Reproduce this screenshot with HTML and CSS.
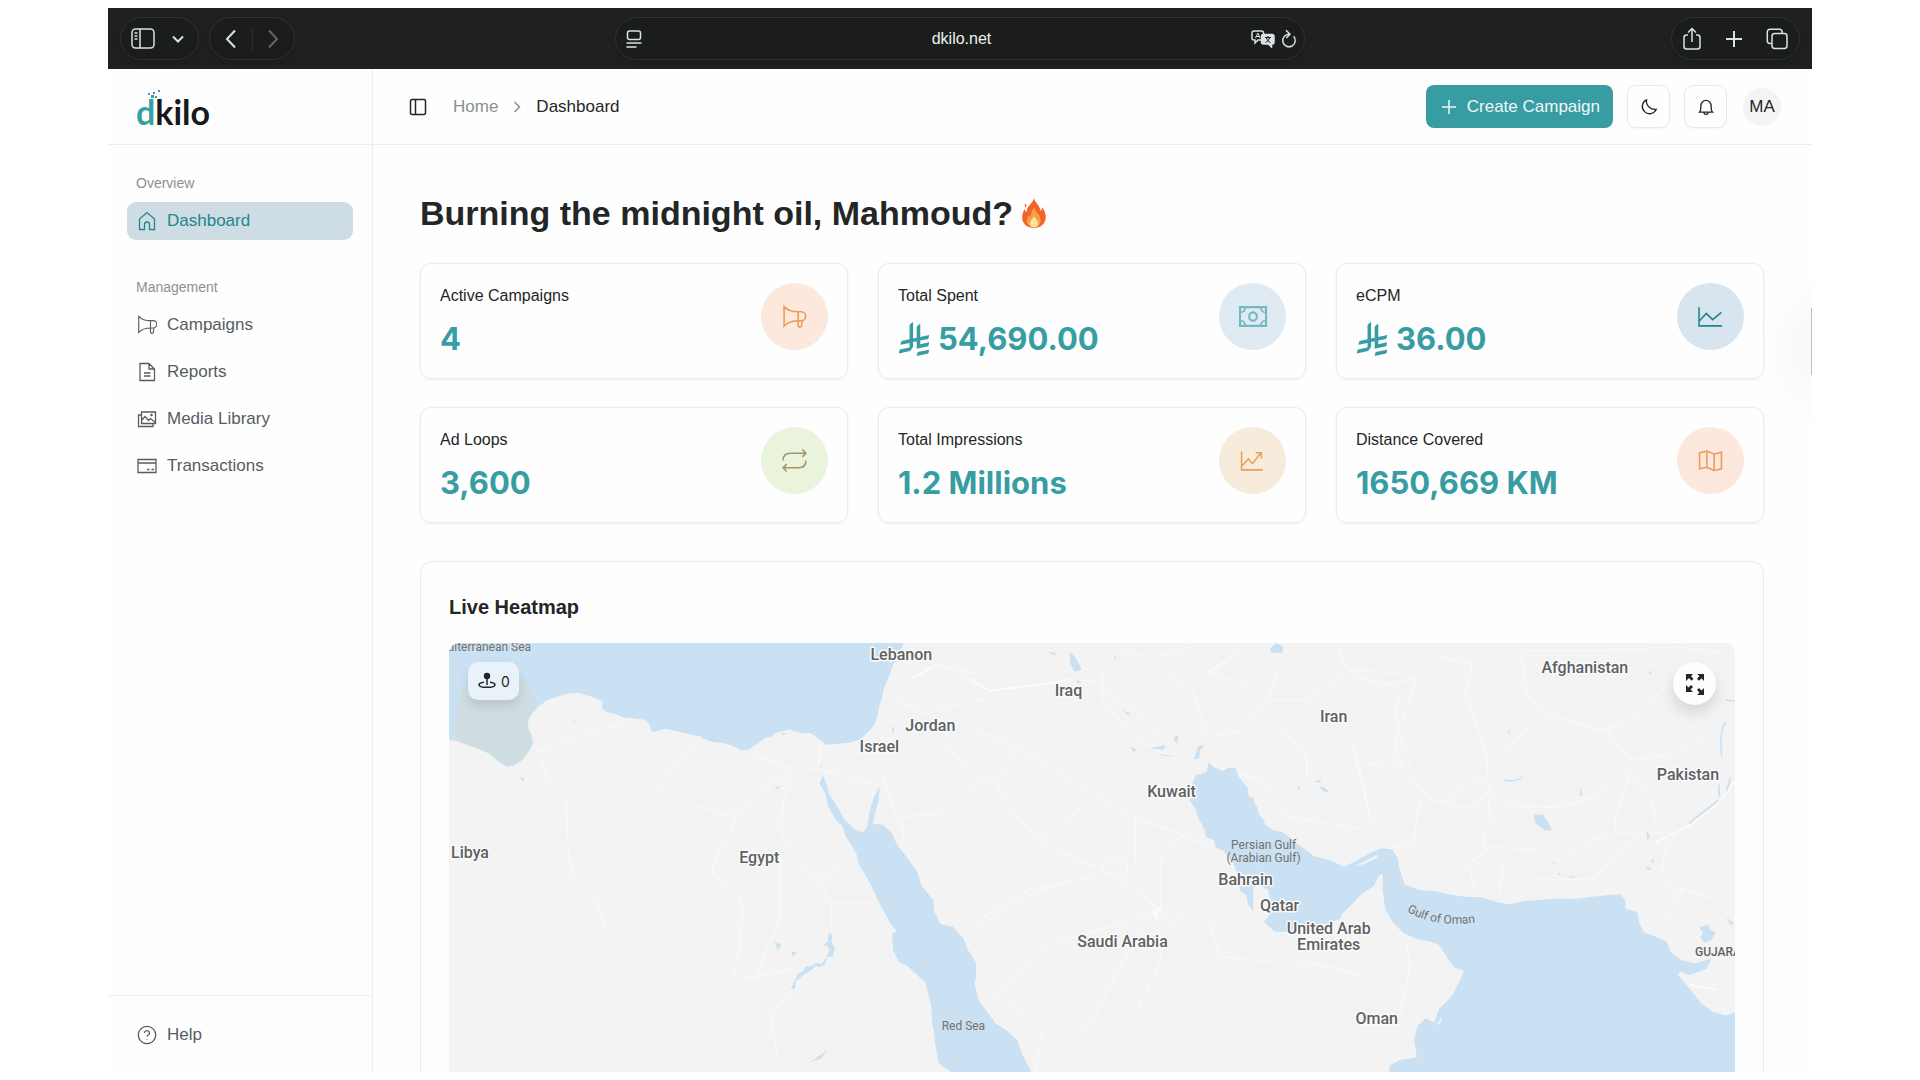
FILE: index.html
```html
<!DOCTYPE html>
<html lang="en">
<head>
<meta charset="utf-8">
<meta name="viewport" content="width=device-width, initial-scale=1">
<title>dkilo – Dashboard</title>
<link rel="stylesheet" href="styles.css">
</head>
<body>
<svg class="defs" aria-hidden="true">
  <symbol id="riyal" viewBox="0 0 1124 1257"><path fill="currentColor" d="M699.62,1113.02h0c-20.06,44.48-33.32,92.75-38.4,143.37l424.51-90.24c20.06-44.47,33.31-92.75,38.4-143.37l-424.51,90.24Z"/><path fill="currentColor" d="M1085.73,895.8c20.06-44.47,33.32-92.75,38.4-143.37l-330.68,70.33v-135.2l292.27-62.11c20.06-44.47,33.32-92.75,38.4-143.37l-330.68,70.27V66.13c-50.67,28.45-95.67,66.32-132.25,110.99v403.35l-132.25,28.11V0c-50.67,28.44-95.67,66.32-132.25,110.99v525.69l-295.91,62.88c-20.06,44.47-33.33,92.75-38.42,143.37l334.33-71.05v170.26l-358.3,76.14c-20.06,44.47-33.32,92.75-38.4,143.37l375.04-79.7c30.53-6.35,56.77-24.4,73.83-49.24l68.78-101.97v-.02c7.14-10.55,11.3-23.27,11.3-36.97v-149.98l132.25-28.11v270.4l424.53-90.28Z"/></symbol>
  <symbol id="horn" viewBox="0 0 24 24"><path d="M2 2.500v18.600C5.500 17.400 10 16 15.500 16V7.500C10 7.500 5.500 6.200 2 2.500ZM15.500 7.500h3a4.250 4.250 0 0 1 0 8.500h-3M15.500 16v5l1.200 1.200 1.800-.5 1-5.500"/></symbol>
</svg>
<div class="window">
  <header class="browser">
    <div class="left">
      <div class="pill pill-side">
        <button class="tool" aria-label="Show sidebar"><svg width="24" height="24" viewBox="0 0 24 24"><rect x="1" y="2" width="22" height="19" rx="3.500"/><path d="M9 2v19M3.500 6h3M3.500 9h3M3.500 12h3"/></svg></button>
        <button class="tool" aria-label="Tab groups"><svg width="12" height="12" viewBox="0 0 12 12"><path stroke-width="2" d="M1 3.500l5 5 5-5"/></svg></button>
      </div>
      <div class="pill pill-nav">
        <button class="tool" aria-label="Back"><svg width="12" height="20" viewBox="0 0 12 20"><path stroke-width="2" d="M10 1.500L2 10l8 8.500"/></svg></button>
        <span class="split"></span>
        <button class="tool dim" aria-label="Forward"><svg width="12" height="20" viewBox="0 0 12 20"><path stroke-width="2" d="M2 1.500L10 10l-8 8.500"/></svg></button>
      </div>
    </div>
    <div class="pill pill-url">
      <svg width="16" height="18" viewBox="0 0 16 18"><rect x="1.500" y="1" width="13" height="8.500" rx="2"/><path d="M.5 13h15M.5 17h10"/></svg>
      <input class="url" type="text" value="dkilo.net" aria-label="Address">
      <span class="url-tools">
        <svg width="24" height="18" viewBox="0 0 24 18"><path d="M3 1h7.500a2 2 0 0 1 2 2v7H7l-3 3v-3H3a2 2 0 0 1-2-2V3a2 2 0 0 1 2-2Z"/><path d="M4.500 8l2.300-5 2.300 5M5.300 6.500h3" stroke-width="1"/><path class="solid" d="M12.500 4.500H21a2 2 0 0 1 2 2V12a2 2 0 0 1-2 2h-.5v3L17.500 14h-5a2 2 0 0 1-2-2V6.500a2 2 0 0 1 2-2Z"/><path class="ink" d="M14 7.500h6M17 6v1.500M14.500 12.500c2.500-1 3.500-3 4-5M15.500 8c.5 2 2 3.800 4 4.500"/></svg>
        <svg width="16" height="20" viewBox="0 0 16 20"><path d="M12.600 7.200a6.300 6.300 0 1 1-4.600-2M5 1.200L9 5.200 5.200 9"/></svg>
      </span>
    </div>
    <div class="pill pill-actions">
      <button class="tool" aria-label="Share"><svg width="20" height="24" viewBox="0 0 20 24"><path d="M6 8H4.500A2.500 2.500 0 0 0 2 10.500v9A2.500 2.500 0 0 0 4.500 22h11a2.500 2.500 0 0 0 2.500-2.500v-9A2.500 2.500 0 0 0 15.500 8H14M10 15V1.500M6 5.500l4-4 4 4"/></svg></button>
      <button class="tool" aria-label="New tab"><svg width="18" height="18" viewBox="0 0 18 18"><path stroke-width="2" d="M9 1v16M1 9h16"/></svg></button>
      <button class="tool" aria-label="Show all tabs"><svg width="22" height="22" viewBox="0 0 22 22"><path d="M6 15.500H4A2.700 2.700 0 0 1 1.300 13V4A2.700 2.700 0 0 1 4 1.300h9.500A2.700 2.700 0 0 1 16.200 4v1.500"/><rect x="6" y="5.500" width="15" height="15" rx="2.700"/></svg></button>
    </div>
  </header>

  <div class="app">
    <aside class="sidebar">
      <a class="brand" href="#" aria-label="dkilo home">
        <svg width="90" height="42" viewBox="0 0 90 42"><text class="logo" x="0" y="38"><tspan class="logo-d">d</tspan>kilo</text><g fill="#389fa6"><rect x="12" y="6" width="2" height="2"/><rect x="15" y="8" width="3" height="3"/><rect x="17" y="5" width="2" height="2"/><rect x="22" y="3" width="2" height="2"/><rect x="19" y="9" width="2" height="2"/></g></svg>
      </a>
      <nav class="nav">
        <h2 class="group">Overview</h2>
        <a class="item active" href="#"><svg viewBox="0 0 20 20"><path d="M2.500 18.500V8L10 1.500 17.500 8v10.500h-5V13.500a2.500 2.500 0 0 0-5 0v5Z"/></svg>Dashboard</a>
        <h2 class="group next">Management</h2>
        <a class="item" href="#"><svg viewBox="0 1 23 23"><use href="#horn" width="24" height="24"/></svg>Campaigns</a>
        <a class="item" href="#"><svg viewBox="0 0 20 20"><path d="M3 1.500h9l5.500 5.500v11.500H3ZM12 1.500v5.500h5.500M7 11h6.500M7 14h6.500"/></svg>Reports</a>
        <a class="item" href="#"><svg viewBox="0 0 20 20"><path d="M4.500 3h14v11.500h-14ZM4.500 6H1.500v11.500H16v-3M4.500 11.500l3.500-4 3.500 4 2-2 5 4"/><circle cx="14.500" cy="6" r=".6"/></svg>Media Library</a>
        <a class="item" href="#"><svg viewBox="0 0 20 20"><path d="M1 3.500h18v13H1ZM1 7h18M10 13.500h2.500M14.500 13.500H17"/></svg>Transactions</a>
      </nav>
      <div class="foot">
        <a class="item" href="#"><svg viewBox="0 0 20 20"><circle cx="10" cy="10" r="8.700"/><path d="M7.500 8a2.500 2.300 0 1 1 3.800 2c-.9.500-1.300.9-1.300 1.700M10 14.200v.6"/></svg>Help</a>
      </div>
    </aside>

    <div class="content">
      <header class="topbar">
        <button class="plain" aria-label="Toggle sidebar"><svg width="18" height="18" viewBox="0 0 18 18"><rect x="1.500" y="1.500" width="15" height="15" rx="1.500"/><path d="M6.500 1.500v15"/></svg></button>
        <nav class="crumbs" aria-label="Breadcrumb">
          <a href="#">Home</a>
          <svg width="8" height="12" viewBox="0 0 8 12"><path d="M1.500 1l5 5-5 5"/></svg>
          <span>Dashboard</span>
        </nav>
        <div class="actions">
          <button class="create"><svg width="16" height="16" viewBox="0 0 16 16"><path d="M8 1v14M1 8h14"/></svg>Create Campaign</button>
          <button class="square" aria-label="Dark mode"><svg width="18" height="18" viewBox="0 0 18 18"><path d="M6.500 1.800A8.500 8.500 0 0 0 16.300 11.300 7.300 7.300 0 1 1 6.500 1.800Z"/></svg></button>
          <button class="square" aria-label="Notifications"><svg width="18" height="18" viewBox="0 0 18 18"><path d="M2.500 14.200h13c-1.400-1.500-1.400-3-1.400-6.200a5.100 5.600 0 0 0-10.200 0c0 3.200 0 4.700-1.400 6.200ZM7 14.500c0 2.500 4 2.500 4 0"/></svg></button>
          <button class="avatar">MA</button>
        </div>
      </header>

      <main class="main">
        <h1 class="title">Burning the midnight oil, Mahmoud?
          <svg width="24" height="30" viewBox="0 0 24 30" role="img" aria-label="fire"><path fill="#f4632a" d="M12 0c0 3.500 6 7 6.500 13 1-1 1.500-2.500 1.500-4 3 4 4 7.500 3.700 11.500C23 26 18.500 30 12 30S.5 26 .2 20C0 16 1.500 13.500 2.500 11c.5 1.500 1 2.500 2 3.200C4.500 8 10.500 6 12 0ZM3.500 5.500c1.200 1.200 1 3 0 4-1-1.200-1-3 0-4Z"/><path fill="#f6a04a" d="M12.500 9c-.5 4 5 6.500 6 12 .7 5-2.500 8.500-6.500 8.500S4.500 26.500 5 22c.3-2.500 1.500-3.500 2-5 .8.800 1.200 1.500 1.500 2.500C9.500 16.500 9 12 12.500 9Z"/><path fill="#fbe3a0" d="M12 18c1 3 4 4 4 7.500 0 2.500-1.800 4-4 4s-4-1.500-4-4C8 22.500 11 21 12 18Z"/></svg>
        </h1>

        <section class="stats" aria-label="Statistics">
          <article class="card"><div><h3>Active Campaigns</h3><p class="value">4</p></div><span class="disc peach"><svg viewBox="0 0 24 24"><use href="#horn"/></svg></span></article>
          <article class="card"><div><h3>Total Spent</h3><p class="value"><svg class="riyal"><use href="#riyal"/></svg>54,690.00</p></div><span class="disc sky"><svg viewBox="0 0 24 24"><path stroke-width="2" d="M0 3h25v18H0Z"/><ellipse cx="12.500" cy="12" rx="3.700" ry="4" stroke-width="2"/><path d="M5 3c0 3-1.500 5-5 5M20 3c0 3 1.500 5 5 5M5 21c0-3-1.500-5-5-5M20 21c0-3 1.500-5 5-5"/></svg></span></article>
          <article class="card"><div><h3>eCPM</h3><p class="value"><svg class="riyal"><use href="#riyal"/></svg>36.00</p></div><span class="disc blue"><svg viewBox="0 0 24 24"><path d="M1 3v18h22M1.500 16l6.500-7 6 6 8.500-7"/></svg></span></article>
          <article class="card"><div><h3>Ad Loops</h3><p class="value">3,600</p></div><span class="disc green"><svg viewBox="0 0 24 24"><path d="M1 12C1 7 3.500 5 8 5h15M19.500 1.500L23 5l-3.500 3.500M23 12c0 5-2.500 7-7 7H1M4.500 15.500L1 19l3.500 3.500"/></svg></span></article>
          <article class="card"><div><h3>Total Impressions</h3><p class="value">1.2 Millions</p></div><span class="disc sand"><svg viewBox="0 0 24 24"><path d="M1.500 3v18H22M2 17l6-6.500 4 4.500 8-10.500M15 4.500h5.500V10"/></svg></span></article>
          <article class="card"><div><h3>Distance Covered</h3><p class="value">1650,669 KM</p></div><span class="disc peach"><svg viewBox="0 0 24 24"><path d="M1.500 4.500L8.500 3l7 3 7-2v16l-7 1.500-7-3-7 1.500ZM8.500 3v15.500M15.500 6v15.500"/></svg></span></article>
        </section>

        <section class="heat">
          <h2>Live Heatmap</h2>
          <div class="map">
            <svg class="land" viewBox="450 643 1285 429" preserveAspectRatio="xMidYMin slice" role="img" aria-label="Map of the Middle East">
              <g class="road">
                <g transform="translate(410 540) scale(.3444)">
                  <path d="M360 620C440 580 540 560 640 522M370 625C400 660 400 720 455 755C465 850 450 960 500 1015C550 1040 555 1080 570 1125M840 585C780 620 750 690 722 735C770 760 820 775 870 780C900 800 920 800 950 790C970 800 960 780 1010 730L1110 670M945 800C940 870 880 900 880 970C920 1000 970 1010 968 1080C960 1150 960 1200 940 1260C980 1275 1010 1270 1110 1245M1110 680C1080 760 1060 850 1110 900C1150 950 1160 980 1210 980L1270 935M1080 910C1070 1000 1080 1060 1070 1120C1040 1180 1020 1230 1010 1270M1190 990L1225 1055H1350M1225 1055V1140M970 612L1100 660L1190 665L1370 715M1120 1290C1080 1340 1050 1370 1050 1400L1070 1500M1190 590V660"/>
                </g>
                <g transform="translate(850 630) scale(.3571 .3333)">
                  <path class="bold" d="M170 150L250 100M340 150L395 182L560 160L620 148M1000 130L1050 95"/>
                  <path d="M250 100L340 150M620 148L700 155M705 110L710 210L790 320L920 395M1050 95L1110 50M130 210L210 250L440 190M95 440C120 560 150 560 155 640M150 560L260 550L370 440L410 460L480 340M280 110L350 130M230 320L300 380L370 440M340 300C500 340 620 470 800 560L930 615L1030 660M410 460C440 540 500 590 530 635L650 530M530 635C600 660 650 700 760 745L880 850L900 885H1160M800 560V700M390 870C480 800 560 760 700 735M700 735L720 680L780 690M350 880L500 780L620 750M930 615L870 690V840M390 870L340 910M400 1105L540 950L760 880L850 850M620 1250L680 1170L740 1050L820 880M870 900V1000L800 1150M1000 760L900 880M1010 880L1040 980L1340 1010L1430 1040M440 1100L540 1200L520 1326M780 700L770 760M700 150C760 250 850 240 870 330M870 120L960 180L1000 320M1000 130C1100 150 1130 180 1170 210H1280L1400 120L1540 130M1200 130L1170 210M1210 300L1280 380V440M1170 210L1100 300L1000 320M1410 350L1440 460L1460 580M1000 400L1150 450L1230 560L1450 600M1540 200C1500 280 1568 340 1568 410M740 40C800 90 850 90 960 50"/>
                  <path class="bold" d="M845 840L870 865M870 835L850 860M858 830V870"/>
                </g>
                <g transform="translate(1300 540) scale(.3444)">
                  <path d="M110 300C120 370 150 400 250 420L340 400L310 500C270 560 270 620 300 660C360 740 400 780 440 750C500 680 530 700 545 700M400 300L410 340L500 360L480 450C520 560 550 600 545 700C560 770 650 780 750 775C860 760 900 700 960 670C940 750 900 800 920 850C980 850 1020 850 1090 850M560 640L600 600L720 505L860 550H890L1000 500L1060 420M640 320L660 450L720 505M890 550L960 640L1080 620L1180 570M960 670L1020 760L1040 840M400 755C480 780 480 800 545 730L555 820C530 870 520 880 545 900L590 950L580 1030M545 900L490 940L510 1030M550 890L700 900M730 940L850 870L900 850M350 740L330 880L240 900M150 610L200 650L300 660M150 600L180 700L200 800M680 985H850L950 890L1000 850M1090 860C1020 950 1060 1010 1110 1020L1060 1100M1100 1010L1200 1040M310 1170L320 1240L290 1380M0 1220L180 1260M650 320H900L1100 310L1230 330"/>
                  <path class="bold" d="M1030 880L1130 830L1220 760L1263 700M1130 1290L1210 1305"/>
                </g>
              </g>
              <g class="water">
                <g transform="translate(410 540) scale(.3444)">
                  <path d="M116 298H1435L1430 315 1418 340 1405 362 1395 390 1378 430 1372 460 1365 480 1360 510 1350 535 1338 552 1310 578 1280 588 1240 592 1210 594 1190 578 1165 560 1140 562 1105 550 1080 556 1060 562 1052 572 1035 574 1010 592 985 608 965 612 940 598 915 590 880 586 850 575 848 570 820 565 780 556 745 548 705 558 697 535 685 522 655 518 625 516 600 505 575 500 560 490 562 468 530 455 495 444 460 446 430 455 400 465 375 485 352 510 345 530 348 550 357 568 360 590 350 610 330 638 305 655 285 658 262 645 235 622 200 602 160 588 116 580Z"/>
                  <path d="M1200 683L1212 710 1218 735 1240 770 1262 810 1290 838 1318 850 1330 830 1338 780 1350 745 1366 716 1362 760 1350 800 1345 825 1375 828 1395 845 1420 890 1450 930 1480 980 1485 1000 1520 1045 1522 1080 1540 1112 1568 1128V1530L1540 1518 1530 1460 1518 1400 1515 1350 1498 1285 1445 1235 1415 1210 1403 1170 1403 1140 1418 1138 1395 1110 1370 1055 1340 1000 1305 940 1298 910 1270 865 1270 840 1240 815 1215 770 1208 735 1192 708Z"/>
                  <path d="M1108 1302L1118 1280 1130 1258 1145 1250 1150 1238 1170 1236 1180 1228 1198 1230 1212 1210 1220 1190 1212 1175 1200 1178 1215 1165 1218 1140 1228 1145 1226 1165 1236 1185 1228 1210 1215 1210 1205 1235 1190 1240 1180 1236 1165 1250 1150 1258 1135 1270 1122 1280 1120 1302ZM1060 1165L1070 1172 1080 1170 1076 1182 1070 1190ZM1108 1195H1125L1115 1210ZM1165 1515L1185 1500 1215 1480 1195 1505ZM320 685L336 695 330 700ZM1403 545L1408 548 1402 568ZM1060 717L1080 715 1068 723ZM1190 650L1200 658 1195 660ZM475 522L482 528 478 531ZM1078 562L1100 560 1085 567Z"/>
                </g>
                <g transform="translate(850 630) scale(.3571 .3333)">
                  <path d="M-20 585L20 605 40 605 50 595 65 582 95 584 120 610 130 640 160 680 190 725 200 765 235 810 238 845 255 882 290 890 320 925 330 955 355 1000 355 1040 350 1060 362 1110 410 1180 440 1200 470 1230 485 1275 512 1330H290L250 1298 240 1240 235 1170 228 1120 215 1055 170 1010 140 995 122 960 122 910 135 905 105 860 80 810 50 740 25 690 20 660 -10 620Z"/>
                  <path d="M1005 397L1020 412 1045 422 1062 412 1080 413 1090 440 1115 475 1118 500 1132 505 1135 525 1142 530 1145 550 1158 568 1165 585 1190 602 1210 605 1230 620 1250 640 1280 660 1300 678 1345 690 1385 710 1430 695 1470 672 1495 657 1520 657 1500 740 1490 732 1475 740 1460 765 1435 790 1400 830 1380 850 1375 865 1340 880 1250 905 1190 905 1160 875 1175 855 1180 820 1172 780 1150 765 1130 772 1130 845 1115 820 1110 795 1092 780 1088 740 1075 700 1045 660 1025 652 1020 630 998 620 995 600 975 560 970 540 952 510 960 500 955 470 965 450 968 435 985 432 1000 425Z"/>
                  <path d="M617 65L635 85 650 120 630 125 618 100ZM1178 55L1195 40 1215 50 1212 68 1180 68ZM555 65L578 68 575 77ZM635 150L650 155 640 162ZM762 240L788 250 780 255ZM785 350L805 358 795 366ZM840 355L885 345 880 358ZM912 318L920 315 918 340 908 330ZM865 370L912 380 880 378ZM965 388L975 350 995 345 982 360 978 385ZM1300 455L1320 450 1318 458ZM1312 470L1330 472 1345 488 1328 484ZM1252 468L1262 475 1258 480ZM120 292L126 290 122 315ZM740 75L748 82 745 90Z"/>
                </g>
                <g transform="translate(1300 540) scale(.3444)">
                  <path d="M80 932L130 948 165 930 205 908 235 895 250 895 270 900 285 925 288 950 300 985 305 1000 345 1015 400 1020 430 1028 480 1035 525 1037 555 1045 575 1052 610 1057 650 1048 700 1044 750 1040 800 1042 850 1035 900 1030 930 1028 945 1045 945 1070 980 1080 985 1110 1000 1140 1030 1150 1065 1165 1075 1195 1110 1220 1150 1228 1195 1215 1180 1245 1130 1262 1105 1252 1097 1262 1130 1300 1165 1345 1200 1370 1235 1380 1267 1370V1550H258L262 1525 290 1510 340 1502 332 1450 342 1410 365 1388 390 1400 405 1360 440 1325 465 1280 476 1250 450 1242 430 1215 405 1175 380 1165 340 1158 300 1140 270 1110 248 1070 240 1010 242 965 232 970 215 1005 160 1040Z"/>
                  <path d="M680 797L705 797 722 820 732 843 710 842 682 820ZM592 695L622 697 640 690 650 682 645 692 615 702 595 700ZM815 715L820 740 812 745ZM602 552L612 560 608 565ZM1160 1125L1185 1115 1190 1130 1208 1140 1195 1160 1175 1168 1162 1155 1170 1140ZM1238 1095L1258 1110 1252 1120ZM730 935H745L735 940ZM780 978L805 975 790 981ZM1012 382H1022L1018 392ZM1005 842L1016 858 1010 875ZM1020 930L1028 925 1025 940ZM748 965L760 970 752 973Z"/>
                  <path class="river" d="M1236 528C1215 560 1225 600 1224 630M1250 690L1238 730M1215 755L1130 822M1217 710V745M1235 465L1263 468M1005 950L1020 955"/>
                </g>
              </g>
              <path class="shoal" transform="translate(410 540) scale(.3444)" d="M137 583V500L148 445 175 410 330 400 350 430 370 480 348 515 343 535 347 560 357 590 330 638 285 655 235 620Z"/>
              <g class="isle">
                <path transform="translate(850 630) scale(.3571 .3333)" d="M1420 705L1480 672 1475 685 1430 705Z"/>
                <path transform="translate(1300 540) scale(.3444)" d="M397 1410L412 1383 410 1400Z"/>
              </g>
              <g class="country">
                <text x="902" y="660">Lebanon</text><text x="1069" y="696">Iraq</text><text x="1334" y="722">Iran</text>
                <text x="931" y="731">Jordan</text><text x="880" y="752">Israel</text><text x="1585" y="673">Afghanistan</text>
                <text x="1688" y="780">Pakistan</text><text x="1172" y="797">Kuwait</text><text x="471" y="858">Libya</text>
                <text x="760" y="863">Egypt</text><text x="1246" y="885">Bahrain</text><text x="1280" y="911">Qatar</text>
                <text x="1123" y="947">Saudi Arabia</text><text x="1329" y="934">United Arab</text><text x="1329" y="950">Emirates</text>
                <text x="1377" y="1024">Oman</text>
              </g>
              <g class="sea">
                <text x="1264" y="849">Persian Gulf</text><text x="1264" y="862">(Arabian Gulf)</text><text x="964" y="1030">Red Sea</text>
                <text class="end" x="532" y="651">Mediterranean Sea</text>
                <path id="oman-curve" fill="none" stroke="none" d="M1407 911Q1435 928 1476 922"/>
                <text class="start"><textPath href="#oman-curve">Gulf of Oman</textPath></text>
              </g>
              <text class="region" x="1695" y="956">GUJARAT</text>
            </svg>
            <div class="count"><svg width="18" height="18" viewBox="0 0 18 18"><circle class="dot" cx="9" cy="4" r="3.200"/><path d="M9 6v7M6 10.300C3 10.700 1 11.500 1 12.700c0 1.500 3.500 2.600 8 2.600s8-1.100 8-2.600c0-1.200-2-2-5-2.400"/></svg>0</div>
            <button class="expand" aria-label="Fullscreen"><svg width="20" height="22" viewBox="0 0 20 22"><path class="dot" d="M1 1h7L6 3.200l2.500 2.500-2 2L4 5 1 8ZM19 1v7l-2.500-2.800L14 7.700l-2-2L14.500 3 12 1ZM1 19v-7l2.500 2.500L6 12l2 2-2.500 2.500L8 19ZM19 22h-7l2.500-2.500L12 17l2-2 2.500 2.500L19 15Z"/></svg></button>
          </div>
        </section>
      </main>
      <div class="edge"></div>
    </div>
  </div>
</div>
</body>
</html>
```
FILE: styles.css
```css
* { box-sizing: border-box; }
body {
  margin: 0;
  padding: 8px 108px;
  background: #fff;
  color: #232627;
  font: 17px/24px "Liberation Sans", Arial, sans-serif;
}
h1, h2, h3, p { margin: 0; }
a { color: inherit; text-decoration: none; }
button { font: inherit; color: inherit; background: none; border: 0; padding: 0; }
svg { fill: none; stroke: currentColor; stroke-width: 1.5px; flex: none; display: block; }
svg [stroke-width="2"] { stroke-width: 2px; }
.defs { position: absolute; width: 0; height: 0; }

.window {
  height: calc(100vh - 16px);
  display: flex;
  flex-direction: column;
  overflow: hidden;
  background: #fefefe;
}

/* Browser toolbar */
.browser {
  display: grid;
  grid-template-columns: 1fr minmax(0, 690px) 1fr;
  align-items: center;
  flex: none;
  height: 61px;
  padding: 0 12px;
  background: #1f2120;
  color: #d9e2e4;
}
.left { display: flex; gap: 10px; }
.pill {
  display: flex;
  align-items: center;
  height: 43px;
  border: 1px solid #303231;
  border-radius: 22px;
  background: #1b1d1c;
  box-shadow: 0 3px 6px rgba(0, 0, 0, .12);
}
.tool { display: flex; }
.dim { color: #626664; }
.pill-side { width: 79px; padding: 0 14px 0 10px; justify-content: space-between; }
.pill-nav { width: 86px; padding: 0 15px; justify-content: space-between; }
.split { width: 1px; height: 24px; background: #2b2d2c; }
.pill-url { padding: 0 7px 0 10px; }
.url {
  flex: 1;
  min-width: 0;
  margin-left: 30px;
  border: 0;
  background: none;
  color: #eef2f2;
  font: 16px "Liberation Sans", Arial, sans-serif;
  text-align: center;
}
.url-tools { display: flex; align-items: center; gap: 6px; }
.solid { fill: currentColor; }
.ink { stroke: #1b1d1c; stroke-width: 1px; }
.pill-actions { justify-self: end; width: 129px; padding: 0 11px 0 10px; justify-content: space-between; }

/* App shell */
.app { flex: 1; min-height: 0; display: grid; grid-template-columns: 265px 1fr; }
.sidebar { display: flex; flex-direction: column; border-right: 1px solid #ededed; }
.brand { height: 76px; padding: 18px 28px; border-bottom: 1px solid #ededed; }
.brand svg { stroke: none; overflow: visible; }
.logo { font: bold 34px Lato, sans-serif; fill: #17191a; }
.logo-d { fill: #389fa6; }
.nav { flex: 1; padding: 19px 19px 0; color: #565d5f; }
.group { padding: 0 9px; font-size: 14px; line-height: 38px; font-weight: 400; color: #8b9294; }
.next { margin-top: 28px; }
.item {
  display: flex;
  align-items: center;
  gap: 10px;
  height: 38px;
  margin-bottom: 9px;
  padding: 0 10px;
  border-radius: 9px;
}
.item svg { width: 20px; height: 20px; stroke-width: 1.300px; }
.item.active { margin-bottom: 0; background: #cddde3; color: #23858f; }
.foot { height: 77px; padding: 20px 19px 0; border-top: 1px solid #ededed; color: #565d5f; }

.content { position: relative; display: flex; flex-direction: column; min-width: 0; }
.topbar {
  display: flex;
  align-items: center;
  flex: none;
  height: 76px;
  padding: 0 31px 0 36px;
  border-bottom: 1px solid #ededed;
}
.crumbs { display: flex; align-items: center; gap: 15px; margin-left: 26px; }
.crumbs a, .crumbs svg { color: #899092; }
.actions { display: flex; align-items: center; margin-left: auto; gap: 14px; }
.create {
  display: flex;
  align-items: center;
  gap: 10px;
  height: 43px;
  padding: 0 13px 0 15px;
  border-radius: 8px;
  background: #389da3;
  color: #eef7f7;
}
.square {
  display: grid;
  place-items: center;
  width: 43px;
  height: 43px;
  border: 1px solid #e8e8e8;
  border-radius: 9px;
  box-shadow: 0 1px 2px rgba(0, 0, 0, .04);
}
.square svg { stroke-width: 1.300px; }
.avatar { width: 38px; height: 38px; margin-left: 2px; border-radius: 50%; background: #f4f4f4; }

/* Dashboard */
.main { flex: 1; min-height: 0; display: flex; flex-direction: column; padding: 47px 48px 0 47px; }
.title {
  display: flex;
  align-items: center;
  gap: 9px;
  margin-bottom: 29px;
  font-size: 34px;
  line-height: 42px;
}
.title svg { stroke: none; }
.stats { display: grid; grid-template-columns: repeat(3, 1fr); gap: 28px 30px; }
.card {
  display: flex;
  justify-content: space-between;
  height: 116px;
  padding: 19px;
  border: 1px solid #ebebeb;
  border-radius: 11px;
  box-shadow: 0 1px 3px rgba(0, 0, 0, .06);
}
.card h3 { font-size: 16px; line-height: 26px; font-weight: 400; }
.value {
  display: flex;
  align-items: center;
  gap: 8px;
  margin-top: 11px;
  font: 700 31px/38px Inter, sans-serif;
  color: #389da3;
}
.riyal { width: 32px; height: 34px; stroke: none; }
.disc { display: grid; place-items: center; width: 67px; height: 67px; border-radius: 50%; }
.disc svg { width: 25px; height: 25px; overflow: visible; }
.peach { background: #fce8dc; color: #ee9a55; }
.sky { background: #dfeaf3; color: #72b9c1; }
.blue { background: #d8e5ee; color: #23858f; }
.green { background: #eaf4dc; color: #a59564; }
.sand { background: #f7ecdb; color: #ee9f55; }

/* Heatmap */
.heat {
  flex: 1;
  min-height: 0;
  display: flex;
  flex-direction: column;
  margin-top: 38px;
  padding: 32px 28px 0;
  border: 1px solid #ebebeb;
  border-bottom: 0;
  border-radius: 12px 12px 0 0;
}
.heat h2 { margin-bottom: 22px; font-size: 20px; line-height: 27px; }
.map { position: relative; flex: 1; min-height: 0; overflow: hidden; border-radius: 10px 10px 0 0; background: #f3f3f3; }
.land { width: 100%; height: 100%; stroke: none; }
.water { fill: #c9e1f3; }
.river { fill: none; stroke: #c9e1f3; stroke-width: 5px; }
.shoal { fill: #cfdde1; }
.isle { fill: #f3f3f3; }
.road { stroke: #f8f8f8; stroke-width: 4px; }
.bold { stroke: #fdfdfd; }
.land text { font-family: Roboto, sans-serif; paint-order: stroke; stroke-width: 3px; stroke-linejoin: round; }
.country { font-size: 16px; font-weight: 500; fill: #5d6264; stroke: #fafafa; text-anchor: middle; }
.sea { font-size: 12px; fill: #77716b; text-anchor: middle; }
.end { text-anchor: end; }
.start { text-anchor: start; }
.region { font-size: 12px; font-weight: 500; fill: #5d6264; }
.dot { fill: currentColor; stroke: none; }
.count {
  position: absolute;
  top: 19px;
  left: 19px;
  display: flex;
  align-items: center;
  gap: 5px;
  height: 38px;
  padding: 0 9px 0 10px;
  border-radius: 10px;
  background: #e9f2fa;
  box-shadow: 0 6px 10px rgba(0, 0, 0, .1);
  font: 14px Inter, sans-serif;
}
.expand {
  position: absolute;
  top: 19px;
  right: 19px;
  display: grid;
  place-items: center;
  width: 43px;
  height: 43px;
  border-radius: 50%;
  background: #fdfdfd;
  box-shadow: 0 8px 14px rgba(0, 0, 0, .12);
}

/* Collapsed side tab at the window's right edge */
.edge {
  position: absolute;
  top: 239px;
  right: 0;
  width: 1px;
  height: 67px;
  background: #b5c4c5;
  box-shadow: 0 10px 50px 10px rgba(0, 0, 0, .07);
}
```
